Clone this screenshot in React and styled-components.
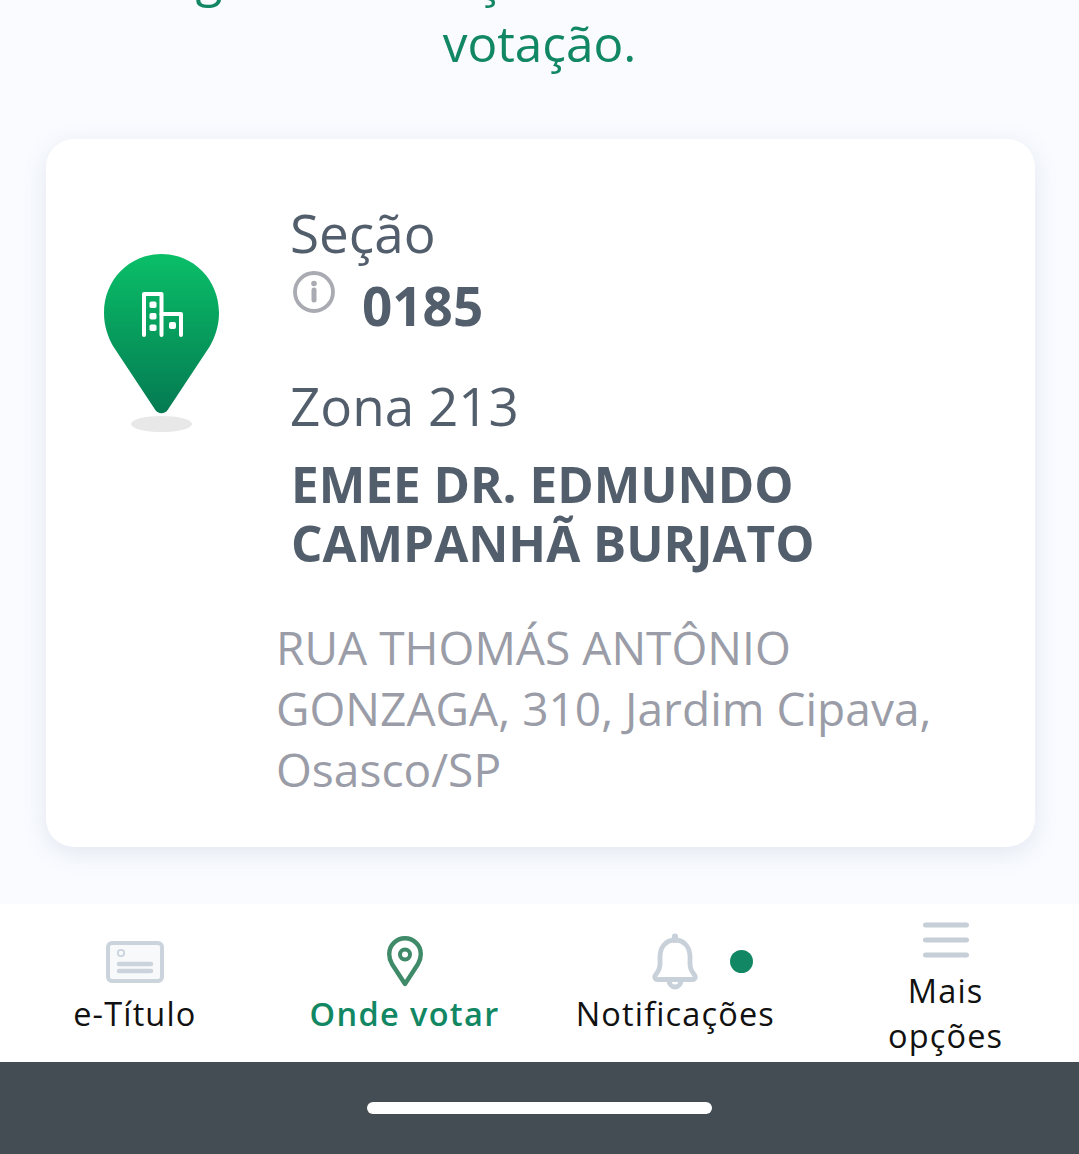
import React from "react";
import styled, { createGlobalStyle } from "styled-components";

const Global = createGlobalStyle`
  html, body { margin: 0; padding: 0; background: #f9fbff; }
  body { font-family: "Open Sans", "Noto Sans", sans-serif; }
`;
const Page = styled.div`
  width: 1079px; height: 1154px; overflow: hidden;
  display: flex; flex-direction: column; background: #f9fbff;
`;
const Scroll = styled.main`
  height: 904px; overflow: hidden; display: flex; flex-direction: column; flex: none;
`;
const Intro = styled.h2`
  margin: -56px 0 0; padding: 0 40px; font-size: 49.5px; line-height: 66px; font-weight: 400;
  text-align: center; color: #128763; height: 132px; flex: none;
`;
const Card = styled.section`
  margin: 63px 44px 0 46px; height: 708px; flex: none; box-sizing: border-box; background: #fff; border-radius: 28px;
  box-shadow: 0 6px 24px rgba(90, 110, 140, 0.14);
  display: grid; grid-template-columns: 231px 1fr; padding: 59px 0 0;
`;
const PinCol = styled.div`
  display: flex; flex-direction: column; align-items: flex-start; padding: 56px 0 0 58px;
`;
const Info = styled.div`
  display: flex; flex-direction: column; color: #525e6b;
`;
const Title = styled.div`
  margin-left: 13px; font-size: 53px; line-height: 70px;
`;
const SectionRow = styled.div`
  display: flex; align-items: flex-start; margin: 1px 0 0 14px; height: 102px;
`;
const InfoIcon = styled.svg`
  width: 46px; height: 46px; flex: none;
`;
const Number = styled.span`
  margin-left: 25px; font-size: 53px; line-height: 74px; font-weight: 700;
`;
const Name = styled.div`
  margin: 13px 0 0 14px; font-size: 49.4px; line-height: 59px; font-weight: 700; width: 560px;
`;
const Address = styled.div`
  margin: 45px 0 0 -1px; font-size: 46.1px; line-height: 61px; color: #9a9da7; width: 680px;
`;
const Nav = styled.nav`
  height: 158px; flex: none; background: #fff; display: grid; grid-template-columns: repeat(4, 1fr);
`;
const NavItem = styled.div`
  display: flex; flex-direction: column; align-items: center; position: relative;
  padding-top: ${p => p.$top}px; padding-left: ${p => p.$shift || 0}px;
`;
const NavLabel = styled.span`
  font-size: 32.5px; line-height: 45px; letter-spacing: ${p => (p.$active ? 1.35 : 1.15)}px; text-align: center;
  color: ${p => (p.$active ? "#128763" : "#111")}; font-weight: ${p => (p.$active ? 600 : 400)};
  margin-top: ${p => p.$gap}px;
`;
const Dot = styled.span`
  position: absolute; left: 190px; top: 46px; width: 23px; height: 23px; border-radius: 50%; background: #128763;
`;
const HomeBar = styled.div`
  flex: 1; background: #454d54; display: flex; justify-content: center; padding-top: 40px;
`;
const Indicator = styled.div`
  width: 345px; height: 12px; border-radius: 6px; background: #fff;
`;

const Pin = () => (
  <svg width="115" height="178" viewBox="0 0 115 178">
    <defs>
      <linearGradient id="pg" x1="0" y1="0" x2="0" y2="1">
        <stop offset="0" stopColor="#0abf68" />
        <stop offset="1" stopColor="#047a52" />
      </linearGradient>
    </defs>
    <ellipse cx="57.5" cy="170" rx="30.5" ry="8" fill="#e8e8e8" />
    <path d="M57.500 0C25.700 0 0 25.500 0 59C0 72 4 83 9 92L51 155.500C54 160.500 61 160.500 64 155.500L106 92C111 83 115 72 115 59C115 25.500 89.300 0 57.500 0Z" fill="url(#pg)" />
    <g fill="none" stroke="#fff" strokeWidth="4" strokeLinejoin="round" strokeLinecap="round">
      <path d="M40 81V40H57.500V81" />
      <path d="M57.500 60H77V81" />
    </g>
    <g fill="#fff">
      <rect x="45.500" y="47.500" width="7" height="6.500" rx="1.800" />
      <rect x="45.500" y="59" width="7" height="6.500" rx="1.800" />
      <rect x="45.500" y="70.500" width="7" height="6.500" rx="1.800" />
      <rect x="65" y="68" width="7" height="7" rx="2" />
    </g>
  </svg>
);

const IdCard = () => (
  <svg width="58" height="42" viewBox="0 0 58 42" fill="none">
    <rect x="2" y="2" width="54" height="38" rx="4" stroke="#cbd3dc" strokeWidth="4" fill="#f8f9fb" />
    <circle cx="15" cy="12" r="3.200" stroke="#cbd3dc" strokeWidth="1.800" />
    <path d="M13 23H45M13 30H45" stroke="#cbd3dc" strokeWidth="4.400" strokeLinecap="round" />
  </svg>
);
const Location = () => (
  <svg width="36" height="52" viewBox="0 0 36 52" fill="none">
    <path d="M18 48L5 28C3 24.500 2.200 21.500 2.200 18C2.200 9.300 9.300 2.200 18 2.200C26.700 2.200 33.800 9.300 33.800 18C33.800 21.500 33 24.500 31 28Z" stroke="#3f8a69" strokeWidth="4.400" strokeLinejoin="round" />
    <circle cx="18" cy="18.500" r="5" stroke="#3f8a69" strokeWidth="4" />
  </svg>
);
const Bell = () => (
  <svg width="46" height="58" viewBox="0 0 46 58" fill="none" stroke="#c8d0d9" strokeWidth="4.800" strokeLinejoin="round" strokeLinecap="round">
    <path d="M23 7C13 7 8 15 8 24V31C8 35 6 39 3.500 42C2 44 3 46.500 5.500 46.500H40.500C43 46.500 44 44 42.500 42C40 39 38 35 38 31V24C38 15 33 7 23 7Z" />
    <path d="M23 7V3.500" strokeWidth="6" />
    <path d="M17 47C17 51 19.500 54 23 54C26.500 54 29 51 29 47" />
  </svg>
);
const Menu = () => (
  <svg width="46" height="36" viewBox="0 0 46 36" stroke="#c6ced7" strokeWidth="5" strokeLinecap="round">
    <path d="M2.500 3H43.500M2.500 18H43.500M2.500 33H43.500" />
  </svg>
);

export default function App() {
  return (
    <Page>
      <Global />
      <Scroll>
        <Intro>Segue informações do seu local de<br />votação.</Intro>
        <Card>
          <PinCol><Pin /></PinCol>
          <Info>
            <Title>Seção</Title>
            <SectionRow>
              <InfoIcon viewBox="0 0 46 46" fill="none">
                <circle cx="23" cy="23" r="19" stroke="#a9aab2" strokeWidth="3.800" />
                <circle cx="23" cy="14.500" r="2.800" fill="#a9aab2" />
                <path d="M23 21V31" stroke="#a9aab2" strokeWidth="5" strokeLinecap="round" />
              </InfoIcon>
              <Number>0185</Number>
            </SectionRow>
            <Title>Zona 213</Title>
            <Name>EMEE DR. EDMUNDO CAMPANHÃ BURJATO</Name>
            <Address>RUA THOMÁS ANTÔNIO GONZAGA, 310, Jardim Cipava, Osasco/SP</Address>
          </Info>
        </Card>
      </Scroll>
      <Nav>
        <NavItem $top={37}><IdCard /><NavLabel $gap={8}>e-Título</NavLabel></NavItem>
        <NavItem $top={32}><Location /><NavLabel $gap={3} $active>Onde votar</NavLabel></NavItem>
        <NavItem $top={29} $shift={2}><Bell /><NavLabel $gap={0}>Notificações</NavLabel><Dot /></NavItem>
        <NavItem $top={18} $shift={3}><Menu /><NavLabel $gap={10}>Mais<br />opções</NavLabel></NavItem>
      </Nav>
      <HomeBar><Indicator /></HomeBar>
    </Page>
  );
}
